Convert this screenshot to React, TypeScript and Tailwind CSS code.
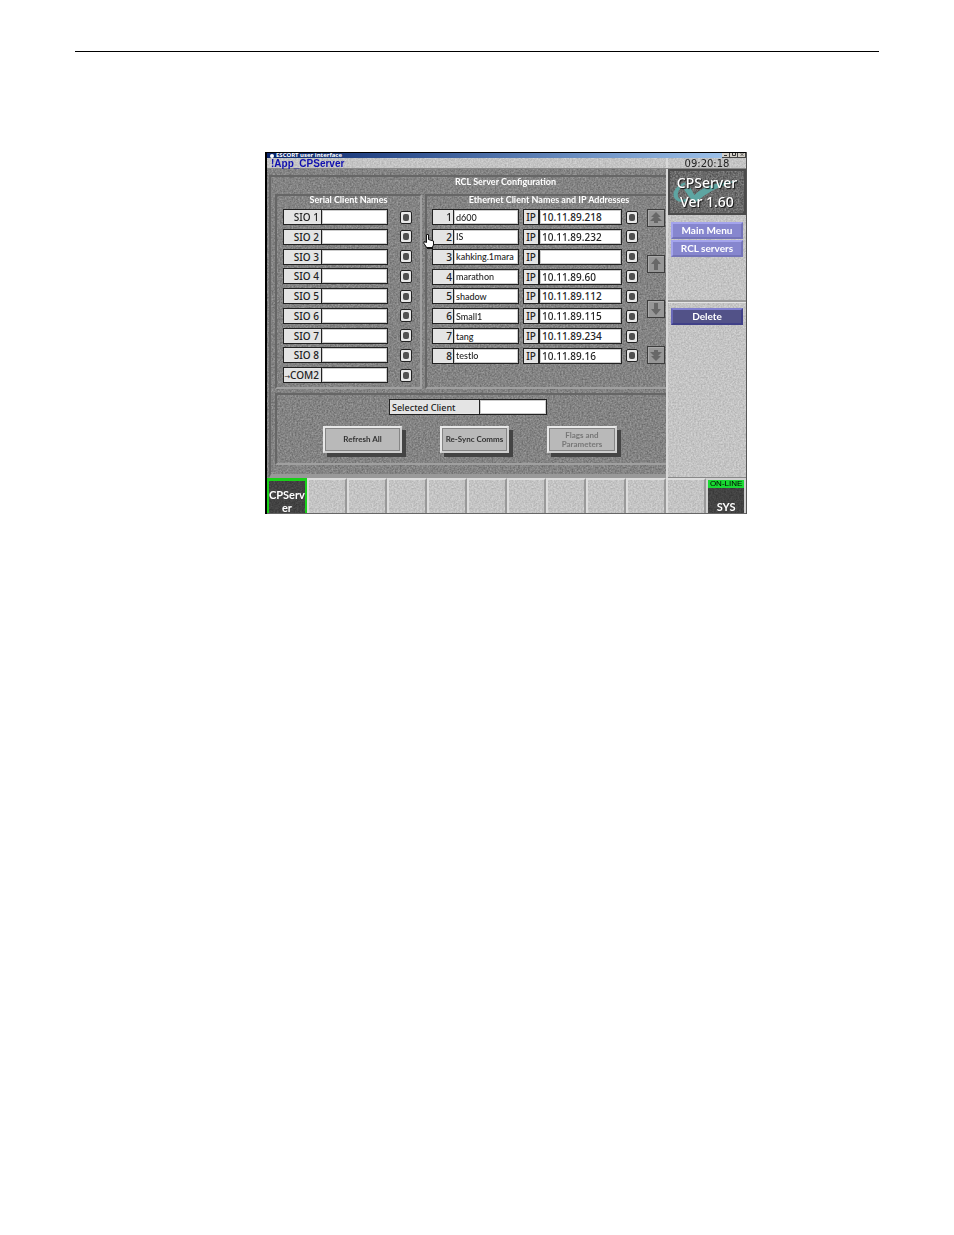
import type { ReactNode } from 'react'

interface EthernetClient {
  name: string
  ip: string
}

const serialClients = ['SIO 1', 'SIO 2', 'SIO 3', 'SIO 4', 'SIO 5', 'SIO 6', 'SIO 7', 'SIO 8', '→COM2']

const ethernetClients: EthernetClient[] = [
  { name: 'd600', ip: '10.11.89.218' },
  { name: 'IS', ip: '10.11.89.232' },
  { name: 'kahking.1mara', ip: '' },
  { name: 'marathon', ip: '10.11.89.60' },
  { name: 'shadow', ip: '10.11.89.112' },
  { name: 'Small1', ip: '10.11.89.115' },
  { name: 'tang', ip: '10.11.89.234' },
  { name: 'testlo', ip: '10.11.89.16' },
]

const labelBox =
  'h-4 shrink-0 border border-[#222] bg-[#e4e4e4] text-[10px] leading-[15px] font-medium text-[#222] whitespace-nowrap'
const fieldBox =
  'h-4 min-w-0 border border-[#222] bg-white pl-[2px] font-medium text-[#222] shadow-[inset_1px_1px_0_#ccc,inset_-1px_-1px_0_#ccc] outline-none'

// grain laid over the flat grey of a panel
function Grain({ className = 'opacity-20' }: { className?: string }) {
  return (
    <svg className={`pointer-events-none absolute inset-0 -z-10 h-full w-full mix-blend-overlay ${className}`} aria-hidden="true">
      <rect width="100%" height="100%" filter="url(#grain)" />
    </svg>
  )
}

function Tick({ label }: { label: string }) {
  return (
    <span className="flex h-[13px] w-3 shrink-0 items-center justify-center rounded-[2px] border border-[#222] bg-[#e8e8e8]">
      <input type="checkbox" aria-label={label} className="h-[7px] w-[6px] appearance-none rounded-[2px] bg-[#505050]" />
    </span>
  )
}

function SerialRow({ name }: { name: string }) {
  const id = `serial-${name}`
  return (
    <div className="flex items-center">
      <label htmlFor={id} className={`${labelBox} w-[38px] border-r-0 pr-[2px] text-right`}>
        {name.startsWith('→') ? (
          <>
            <span className="font-['DejaVu_Sans',sans-serif] text-[7px]">→</span>
            {name.slice(1)}
          </>
        ) : (
          name
        )}
      </label>
      <input id={id} className={`${fieldBox} w-[67px] text-[10px]`} />
      <div className="ml-3 flex">
        <Tick label={`Select ${name}`} />
      </div>
    </div>
  )
}

function EthernetRow({ index, client }: { index: number; client: EthernetClient }) {
  return (
    <div className="flex items-center">
      <label htmlFor={`name-${index}`} className={`${labelBox} w-[21px] border-r-0 pr-px text-right`}>
        {index}
      </label>
      <input
        id={`name-${index}`}
        defaultValue={client.name}
        className={`${fieldBox} w-[66px] font-['Lato',sans-serif] text-[9px]`}
      />
      <label htmlFor={`ip-${index}`} className={`${labelBox} ml-1 w-4 text-center`}>
        IP
      </label>
      <input id={`ip-${index}`} defaultValue={client.ip} className={`${fieldBox} w-[83px] text-[10px]`} />
      <div className="ml-1 flex">
        <Tick label={`Select client ${index}`} />
      </div>
    </div>
  )
}

function ScrollButton({ label, path }: { label: string; path: string }) {
  return (
    <button aria-label={label} className="h-[18px] w-[18px] border border-[#3c3c3c] bg-[#979797] shadow-[inset_1px_1px_0_#aaa]">
      <svg viewBox="0 0 16 16" className="h-4 w-4" fill="#686868">
        <path d={path} />
      </svg>
    </button>
  )
}

function RaisedButton({ className, children }: { className: string; children: ReactNode }) {
  return (
    <button
      className={`h-[27px] border-2 border-t-[#e8e8e8] border-r-[#d0d0d0] border-b-[#d0d0d0] border-l-[#e8e8e8] bg-[#b9b9b9] font-['Lato',sans-serif] leading-[9px] whitespace-nowrap shadow-[inset_1px_1px_0_#858585,inset_-1px_-1px_0_#858585,4px_4px_0_#444] ${className}`}
    >
      {children}
    </button>
  )
}

function SideButton({ className, children }: { className: string; children: ReactNode }) {
  return (
    <button className={`block h-[17px] w-full border-2 text-center font-['Lato',sans-serif] text-[10px] leading-[13px] font-bold text-white ${className}`}>
      {children}
    </button>
  )
}

function Logo() {
  return (
    <div className="relative isolate h-[46px] overflow-hidden border-2 border-[#4b4b4b] bg-[#6a6a6a]">
      <Grain className="opacity-30" />
      <svg viewBox="0 0 76 42" className="absolute inset-0 -z-10 h-full w-full" aria-hidden="true">
        <path d="M15 11C5 15 1 23 5 28c3 4 9 4 13 2l-1-2c-5 2-9 0-9-4 0-5 3-8 8-11z" fill="#5ea5a2" />
        <path d="M14 18l7-1 4 7C35 15 49 10 71 10 52 14 38 21 25 33z" fill="#5ea5a2" />
      </svg>
      <div className="pt-[2px] text-center text-[14px] leading-[19px] font-medium text-white [text-shadow:1px_1px_1px_#111]">
        <div>CPServer</div>
        <div>Ver 1.60</div>
      </div>
    </div>
  )
}

function TitleBar() {
  return (
    <div className="flex h-[6px] items-end overflow-hidden border-t border-black bg-linear-to-r from-[#0a246a] to-[#a6caf0]">
      <span className="ml-[3px] h-1 w-1 shrink-0 rounded-full bg-white" />
      <h1 className="ml-[2px] grow text-[6px] leading-[6px] font-bold whitespace-nowrap text-white">
        ESCORT user interface
      </h1>
      <div className="flex h-[5px] bg-[#d4d0c8]">
        {['Minimize', 'Maximize', 'Close'].map((name) => (
          <button key={name} aria-label={name} className="flex h-[5px] w-2 items-end justify-center border-r border-b border-[#444] bg-[#d4d0c8]">
            <svg viewBox="0 0 6 4" className="h-1 w-[6px]" fill="none" stroke="#333">
              {name === 'Minimize' && <path d="M1 2.5h3" />}
              {name === 'Maximize' && <path d="M1.5 0v2.500h3V0" />}
              {name === 'Close' && <path d="M1.500 0l3 3M4.500 0l-3 3" strokeWidth="0.7" />}
            </svg>
          </button>
        ))}
      </div>
    </div>
  )
}

function ConfigPanel() {
  return (
    <section className="relative isolate min-w-0 grow bg-[#838383] pt-[6px] pl-[2px]">
      <Grain />
      <div className="border-t-2 border-b-4 border-l-2 border-t-[#666] border-b-[#999] border-l-[#666] pb-[9px] pl-1">
        <h2 className="h-[17px] pl-[70px] text-center font-['Lato',sans-serif] text-[9px] leading-[10px] font-bold text-white">
          RCL Server Configuration
        </h2>
        <div className="flex gap-[3px]">
          <div className="w-[147px] shrink-0 border-2 border-t-[#666] border-r-[#a0a0a0] border-b-[#a0a0a0] border-l-[#666] pb-1 pl-[6px]">
            <h3 className="h-[13px] pr-[6px] text-center font-['Lato',sans-serif] text-[9px] leading-[7px] font-bold text-white">
              Serial Client Names
            </h3>
            <div className="flex h-[174px] flex-col justify-between">
              {serialClients.map((name) => (
                <SerialRow key={name} name={name} />
              ))}
            </div>
          </div>
          <div className="grow border-t-2 border-b-2 border-l-2 border-t-[#666] border-b-[#a0a0a0] border-l-[#666]">
            <h3 className="h-[13px] pl-[5px] text-center font-['Lato',sans-serif] text-[9px] leading-[7px] font-bold whitespace-nowrap text-white">
              Ethernet Client Names and IP Addresses
            </h3>
            <div className="flex h-[155px] justify-between pr-px pl-[5px]">
              <div className="flex flex-col justify-between">
                {ethernetClients.map((client, i) => (
                  <EthernetRow key={client.name} index={i + 1} client={client} />
                ))}
              </div>
              <div className="flex flex-col justify-between">
                <ScrollButton label="First page" path="M8 2l5 5h-3l4 4h-4v2H6v-2H2l4-4H3z" />
                <ScrollButton label="Scroll up" path="M8 2l5 6h-3v6H6V8H3z" />
                <ScrollButton label="Scroll down" path="M8 14L3 8h3V2h4v6h3z" />
                <ScrollButton label="Last page" path="M8 14l5-5h-3l4-4h-4V3H6v2H2l4 4H3z" />
              </div>
            </div>
          </div>
        </div>
        <div className="mt-1 border-t-2 border-b-2 border-l-2 border-t-[#666] border-b-[#a0a0a0] border-l-[#666] pt-1 pb-[10px]">
          <div className="flex pl-28">
            <label
              htmlFor="selected"
              className="h-4 w-[90px] border border-r-0 border-[#222] bg-[#e4e4e4] pl-[2px] text-[9px] leading-[15px] font-medium text-[#222]"
            >
              Selected Client
            </label>
            <input id="selected" className={`${fieldBox} w-[68px] text-[10px]`} />
          </div>
          <div className="mt-[11px] flex pl-[46px]">
            <RaisedButton className="w-[79px] text-[8px] font-bold text-[#333]">Refresh All</RaisedButton>
            <RaisedButton className="ml-[38px] w-[69px] text-[8px] font-bold text-[#333]">Re-Sync Comms</RaisedButton>
            <RaisedButton className="ml-[38px] w-[70px] text-[8px] font-bold text-[#777]">
              Flags and
              <br />
              Parameters
            </RaisedButton>
          </div>
        </div>
      </div>
    </section>
  )
}

function SidePanel() {
  return (
    <aside className="relative isolate flex w-[80px] shrink-0 flex-col border-l-2 border-[#d8d8d8] bg-[#c4c4c4]">
      <Grain className="opacity-30" />
      <Logo />
      <nav className="flex h-[87px] flex-col gap-px border-b-2 border-[#999] px-[3px] pt-[7px]">
        <SideButton className="border-t-[#a4a4ec] border-r-[#7474b8] border-b-[#7474b8] border-l-[#a4a4ec] bg-[#8686ce]">
          Main Menu
        </SideButton>
        <SideButton className="border-t-[#a4a4ec] border-r-[#7474b8] border-b-[#7474b8] border-l-[#a4a4ec] bg-[#8686ce]">
          RCL servers
        </SideButton>
      </nav>
      <div className="border-t border-[#e4e4e4] px-[3px] pt-[5px]">
        <SideButton className="border-t-[#8080d0] border-r-[#404088] border-b-[#404088] border-l-[#6868b8] bg-[#525288]">
          Delete
        </SideButton>
      </div>
      <div className="grow border-b border-[#888]" />
    </aside>
  )
}

function TaskBar() {
  return (
    <footer className="flex h-[36px] border-b border-[#666] bg-[#c4c4c4]">
      <button className="relative isolate min-w-0 flex-1 overflow-hidden border-x-2 border-t-[3px] border-[#19d019] bg-[#424242] pt-[7px] text-center font-['Lato',sans-serif] text-[11px] leading-[13px] font-bold text-white">
        <Grain />
        CPServ
        <br />
        er
      </button>
      {Array.from({ length: 10 }, (_, i) => (
        <button
          key={i}
          aria-label={`Slot ${i + 2}`}
          className="relative isolate min-w-0 flex-1 border-t-2 border-r-2 border-l-2 border-t-[#ddd] border-r-[#999] border-l-[#ddd] bg-[#c4c4c4]"
        >
          <Grain className="opacity-30" />
        </button>
      ))}
      <button className="relative isolate flex min-w-0 flex-1 flex-col overflow-hidden border-2 border-b-0 border-[#d0d0d0] bg-[#424242] text-center font-['Lato',sans-serif]">
        <Grain />
        <span className="h-2 w-full bg-[#19d832] font-['Liberation_Sans',sans-serif] text-[8px] leading-[8px] whitespace-nowrap text-black">
          ON-LINE
        </span>
        <span className="w-full pt-3 text-[11px] leading-[13px] font-bold text-white">SYS</span>
      </button>
    </footer>
  )
}

export default function App() {
  return (
    <main className="px-[75px] pt-[51px] pb-20 font-['Noto_Sans',sans-serif]">
      <svg className="absolute h-0 w-0" aria-hidden="true">
        <filter id="grain" x="0" y="0" width="100%" height="100%" colorInterpolationFilters="sRGB">
          <feTurbulence type="fractalNoise" baseFrequency="0.6" numOctaves="2" seed="4" />
          <feColorMatrix values="1.6 0 0 0 -0.3  1.6 0 0 0 -0.3  1.6 0 0 0 -0.3  0 0 0 0 1" />
        </filter>
      </svg>
      <hr className="border-t border-black" />
      <div className="relative mt-[100px] ml-[190px] max-w-[482px] border-r border-l-2 border-r-[#555] border-l-black">
        <TitleBar />
        <div className="relative isolate flex h-[11px] border-b border-[#888] bg-[#c4c4c4] text-[10px] leading-[11px]">
          <Grain className="opacity-30" />
          <span className="grow pl-1 font-['Liberation_Sans',sans-serif] font-bold text-[#1010b0]">!App_CPServer</span>
          <time className="w-[80px] border-l-2 border-[#d8d8d8] text-center font-['DejaVu_Sans',sans-serif] text-[#222]">
            09:20:18
          </time>
        </div>
        <div className="flex">
          <ConfigPanel />
          <SidePanel />
        </div>
        <TaskBar />
        {/* mouse pointer */}
        <svg viewBox="0 0 12 17" className="absolute top-[81px] left-[156px] h-[17px] w-3" aria-hidden="true">
          <path d="M3.5 1.5h2v5l5 1.5v4l-1.5 3h-5L1 10.500V8.500l2.500 1z" fill="#fff" stroke="#111" />
          <path d="M4 14h6v2H4z" fill="#111" />
        </svg>
      </div>
    </main>
  )
}
